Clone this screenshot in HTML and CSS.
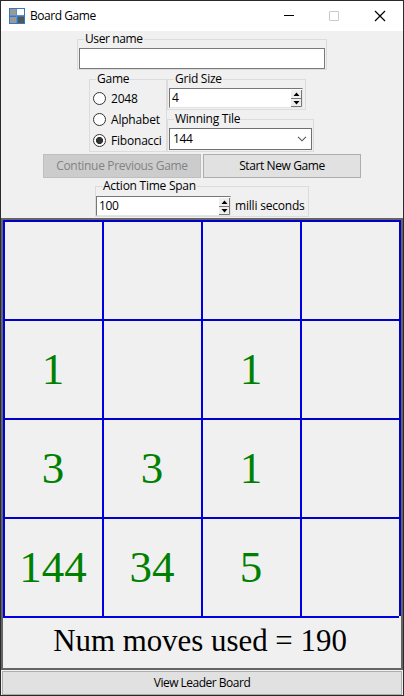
FILE: index.html
```html
<!DOCTYPE html>
<html lang="en">
<head>
<meta charset="utf-8">
<title>Board Game</title>
<link rel="stylesheet" href="styles.css">
</head>
<body>
<div class="window">
  <header class="titlebar">
    <svg class="logo" width="16" height="16" viewBox="0 0 16 16"><path fill="#3478bf" d="M0 0h16v16H0z"/><path fill="#999" d="M1 1h6v6H1zM1 9h6v6H1z"/><path fill="#fff" d="M8 1h7v6H8z"/><path fill="#555" d="M9 9h6v6H9z"/><path fill="#5b91c8" d="M1 7h14v1H1zM7 1h1v14H7z"/></svg>
    <h1 class="title">Board Game</h1>
    <svg class="controls" width="104" height="12" viewBox="0 0 104 12"><path stroke="#000" d="M0 5.500h10"/><path fill="none" stroke="#ccc" d="M45.500 1.500h9v9h-9z"/><path fill="none" stroke="#000" stroke-width="1.2" d="M91 1l10 10M101 1L91 11"/></svg>
  </header>
  <main class="form">
    <section class="group user"><span class="legend">User name</span><div class="field"></div></section>
    <div class="options">
      <section class="group game">
        <span class="legend">Game</span>
        <div class="option"><i class="radio"></i><span>2048</span></div>
        <div class="option"><i class="radio"></i><span>Alphabet</span></div>
        <div class="option"><i class="radio checked"></i><span>Fibonacci</span></div>
      </section>
      <div class="side">
        <section class="group size"><span class="legend">Grid Size</span>
          <div class="spin"><span>4</span><svg class="arrows" width="11" height="17" viewBox="0 0 11 17"><path fill="#eee" d="M0 0h11v17H0z"/><path fill="none" stroke="#777" d="M0 8.500h11M0 16.500h10.500V0"/><path d="M5.500 2.500L8.500 6h-6zM2.500 11h6l-3 3.500z"/></svg></div>
        </section>
        <section class="group winning"><span class="legend">Winning Tile</span>
          <div class="combo"><span>144</span><svg width="10" height="6" viewBox="0 0 10 6"><path fill="none" stroke="#555" stroke-width="1.1" d="M1 .8l4 4 4-4"/></svg></div>
        </section>
      </div>
    </div>
    <div class="actions"><div class="button disabled">Continue Previous Game</div><div class="button">Start New Game</div></div>
    <section class="group span"><span class="legend">Action Time Span</span>
      <div class="spin"><span>100</span><svg class="arrows" width="11" height="17" viewBox="0 0 11 17"><path fill="#eee" d="M0 0h11v17H0z"/><path fill="none" stroke="#777" d="M0 8.500h11M0 16.500h10.500V0"/><path d="M5.500 2.500L8.500 6h-6zM2.500 11h6l-3 3.500z"/></svg></div>
      <span class="unit">milli seconds</span>
    </section>
  </main>
  <section class="canvas">
    <div class="board">
      <div class="cell"></div><div class="cell"></div><div class="cell"></div><div class="cell"></div>
      <div class="cell">1</div><div class="cell"></div><div class="cell">1</div><div class="cell"></div>
      <div class="cell">3</div><div class="cell">3</div><div class="cell">1</div><div class="cell"></div>
      <div class="cell">144</div><div class="cell">34</div><div class="cell">5</div><div class="cell"></div>
    </div>
    <div class="baseline"></div>
    <p class="status">Num moves used = 190</p>
  </section>
  <footer class="footer"><div class="button">View Leader Board</div></footer>
</div>
</body>
</html>
```
FILE: styles.css
```css
* { box-sizing: border-box; }
body { margin: 0; font: 12px/16px "Open Sans", sans-serif; letter-spacing: -0.2px; color: #000; }
.window { width: 404px; height: 696px; display: flex; flex-direction: column; background: #f0f0f0; border: 1px solid #2b292c; overflow: hidden; }
.titlebar { height: 30px; flex: none; display: flex; align-items: center; padding-left: 8px; background: #fff; }
.title { margin: 0 0 0 5px; font: inherit; letter-spacing: -0.45px; }
.controls { margin-left: auto; margin-right: 15px; }
.form { height: 187px; flex: none; display: flex; flex-direction: column; align-items: center; padding-top: 8px; }
.group { position: relative; border: 1px solid #dcdcdc; flex: none; }
.legend { position: absolute; top: -9px; left: 6px; padding: 0 1px; line-height: 16px; background: #f0f0f0; white-space: nowrap; letter-spacing: -0.25px; }
.user { width: 250px; height: 31px; padding: 8px 1px 0; }
.user .legend { letter-spacing: -0.4px; }
.field { height: 21px; border: 1px solid #7a7a7a; background: #fff; }
.options { display: flex; width: 226px; height: 73px; margin: 9px 0 2px; }
.game { width: 78px; height: 73px; padding: 8px 0 0 3px; }
.option { display: flex; align-items: center; height: 21px; gap: 5px; }
.radio { width: 13px; height: 13px; flex: none; border: 1px solid #333; border-radius: 50%; background: #fff; }
.checked { background: radial-gradient(circle, #333 0 3.2px, #fff 3.9px); }
.side { width: 147px; display: flex; flex-direction: column; gap: 9px; }
.size { width: 139px; height: 31px; padding: 8px 2px 0 1px; }
.winning { height: 33px; padding: 8px 1px 0; }
.spin { display: flex; align-items: center; justify-content: space-between; height: 20px; padding-left: 2px; background: #fff; border: 1px solid; border-color: #777 #e4e4e4 #e4e4e4 #777; letter-spacing: -0.4px; }
.combo { display: flex; align-items: center; justify-content: space-between; height: 22px; padding: 0 4px 0 3px; border: 1px solid #707070; background: #fff; letter-spacing: -0.4px; }
.actions { display: flex; gap: 2px; margin-bottom: 8px; }
.button { width: 158px; height: 24px; display: flex; align-items: center; justify-content: center; background: #e1e1e1; border: 1px solid #adadad; letter-spacing: -0.4px; }
.disabled { background: #ccc; border-color: #bfbfbf; color: #838383; letter-spacing: -0.32px; }
.span { display: flex; width: 214px; height: 31px; padding-top: 9px; }
.span .spin { width: 135px; }
.unit { margin: 2px 0 0 4px; white-space: nowrap; }
.canvas { height: 452px; flex: none; border: 2px solid #646464; overflow: hidden; letter-spacing: 0; font-family: "Liberation Serif", serif; }
.board { display: grid; grid-template-columns: repeat(3, 99px) 101px; grid-template-rows: repeat(4, 99px); }
.cell { display: flex; align-items: center; justify-content: center; border-top: 2px solid #0000c8; border-left: 2px solid #0000e0; color: #008000; font-size: 45px; line-height: 46px; padding: 0 1px 1px 0; }
.cell:nth-child(4n) { border-right: 2px solid #0000c8; }
.baseline { width: 396px; height: 2px; background: #0000e0; }
.status { margin: 3px 0 0 -4px; text-align: center; font-size: 30.9px; line-height: 40px; }
.footer { padding: 1px 1px 0; }
.footer .button { width: 400px; letter-spacing: -0.5px; }
```
